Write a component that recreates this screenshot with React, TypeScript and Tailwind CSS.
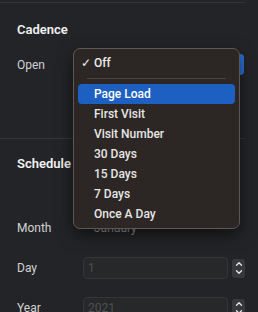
import { ChevronUp, ChevronDown } from "lucide-react";

const items = ["Page Load", "First Visit", "Visit Number", "30 Days", "15 Days", "7 Days", "Once A Day"];

function Stepper() {
  return (
    <div className="ml-[4px] flex h-[19px] w-[13px] shrink-0 flex-col items-center justify-center rounded-[3px] bg-[#37383b]">
      <ChevronUp size={10} strokeWidth={3} className="-mb-[1px] text-[#e8e8e8]" />
      <ChevronDown size={10} strokeWidth={3} className="-mt-[1px] text-[#e8e8e8]" />
    </div>
  );
}

function NumberRow({ label, value }: { label: string; value: string }) {
  return (
    <div className="flex h-[22px] items-center">
      <span className="w-[66px] shrink-0 text-[12px] text-[#d2d2d2]">{label}</span>
      <div className="flex h-[22px] w-[145px] shrink-0 items-center rounded-[4px] border border-[#353638] bg-[#27282a] px-[4px] text-[12px] text-[#4e4f52]">
        {value}
      </div>
      <Stepper />
    </div>
  );
}

export default function App() {
  return (
    <div
      className="relative h-[312px] w-[258px] overflow-hidden bg-[#232427]"
      style={{ fontFamily: "Roboto, 'Noto Sans', sans-serif" }}
    >
      <div className="mt-[2px] w-[245px] border-t border-[#343538]" />

      <div className="pl-[17px]">
        <div className="mt-[17px] h-[20px] text-[13px] font-semibold leading-[20px] text-[#f2f2f2]">Cadence</div>
        <div className="mt-[14px] flex h-[21px] items-center">
          <span className="w-[66px] shrink-0 text-[12px] text-[#d2d2d2]">Open</span>
          <div className="flex h-[21px] w-[161px] shrink-0 items-center justify-end rounded-[4px] bg-[#3a3b3e]">
            <div className="h-[21px] w-[4px] rounded-r-[4px] bg-[#2a6fd6]" />
          </div>
        </div>
      </div>

      <div className="mt-[63px] w-[245px] border-t border-[#343538]" />

      <div className="pl-[17px]">
        <div className="mt-[15px] h-[20px] text-[13px] font-semibold leading-[20px] text-[#f2f2f2]">Schedule</div>
        <div className="mt-[43px] flex h-[21px] items-center">
          <span className="w-[66px] shrink-0 text-[12px] text-[#d2d2d2]">Month</span>
          <div className="flex h-[21px] w-[161px] shrink-0 items-center justify-between rounded-[4px] px-[11px] text-[12px] text-[#9a9a9a]">
            <span>January</span>
            <ChevronDown size={9} strokeWidth={3} className="text-[#8a8a8a]" />
          </div>
        </div>
        <div className="mt-[19px]">
          <NumberRow label="Day" value="1" />
        </div>
        <div className="mt-[18px]">
          <NumberRow label="Year" value="2021" />
        </div>
      </div>

      <div className="absolute left-[73px] top-[48px] w-[167px] rounded-[7px] border border-[#5c5856] bg-[#2c2725] py-[4px] shadow-[0_6px_16px_rgba(0,0,0,0.55)]">
        <div className="flex h-[20px] items-center text-[12px] font-medium text-[#ececec]">
          <span className="w-[20px] pl-[7px]">✓</span>
          <span>Off</span>
        </div>
        <div className="flex h-[11px] items-center px-[13px]">
          <div className="w-full border-t border-[#4a4644]" />
        </div>
        {items.map((it, i) => (
          <div key={it} className="px-[4px]">
            <div
              className={
                i === 0
                  ? "flex h-[20px] items-center rounded-[4px] bg-[#1e5fc2] pl-[16px] text-[12px] font-medium text-white"
                  : "flex h-[20px] items-center pl-[16px] text-[12px] font-medium text-[#e6e6e6]"
              }
            >
              {it}
            </div>
          </div>
        ))}
      </div>
    </div>
  );
}
